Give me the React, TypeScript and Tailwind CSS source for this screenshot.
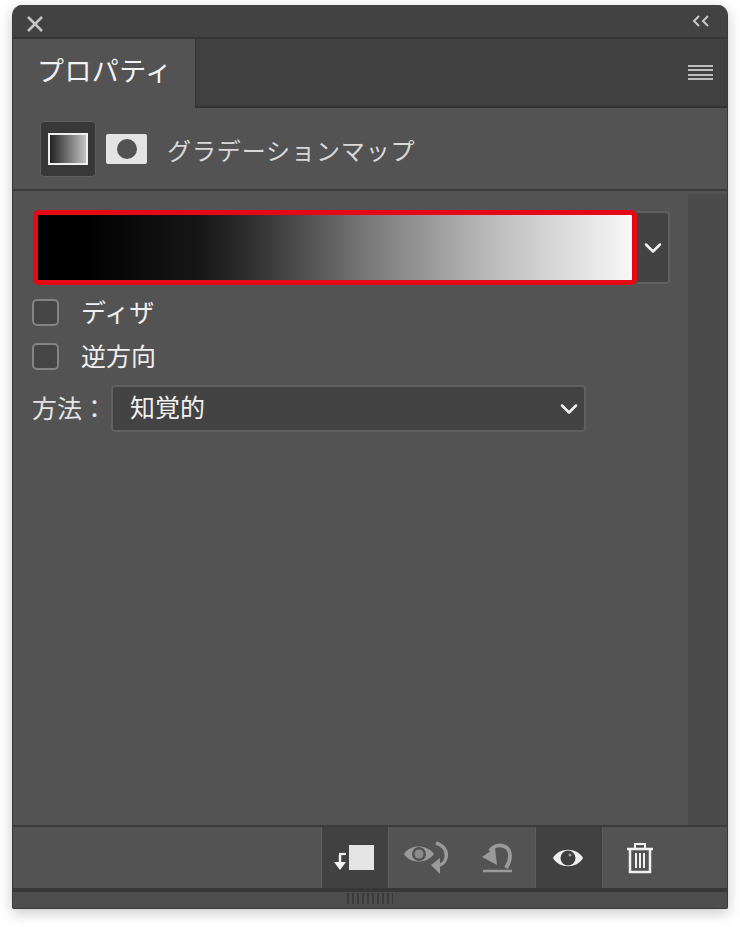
import { ChevronDown } from "lucide-react";

const font = { fontFamily: '"Noto Sans CJK JP", "Noto Sans", sans-serif' };

const Checkbox = ({ label, className }: { label: string; className: string }) => (
  <div className={`flex items-center ${className}`}>
    <div className="h-[27px] w-[27px] rounded-[5px] border-2 border-[#848484] bg-[#454545]" />
    <span className="mb-[3px] ml-[22px] text-[25px] leading-[24px] text-[#efefef]">{label}</span>
  </div>
);

const ClipIcon = () => (
  <svg width="42" height="28" viewBox="0 0 42 28">
    <path d="M8 11V20" stroke="#f2f2f2" strokeWidth="2.5" fill="none" />
    <path d="M7 10H14" stroke="#f2f2f2" strokeWidth="2.2" fill="none" />
    <path d="M2 18H14L8 26Z" fill="#f2f2f2" />
    <rect x="17" y="1" width="25" height="25" fill="#e4e4e4" />
  </svg>
);

const EyeCycleIcon = () => (
  <svg width="46" height="34" viewBox="0 0 46 34">
    <path d="M1 13C7 3 24 3 31 13C24 23 7 23 1 13Z" fill="#9a9a9a" />
    <circle cx="16" cy="13" r="7" fill="#535353" />
    <circle cx="16" cy="13" r="4.5" fill="#8c8c8c" />
    <path d="M33 2C46 6 47 21 35 25" stroke="#9a9a9a" strokeWidth="3.5" fill="none" />
    <path d="M28 24L37 17V33Z" fill="#9a9a9a" />
  </svg>
);

const ResetIcon = () => (
  <svg width="34" height="34" viewBox="0 0 34 34">
    <path d="M10 10C15 2 30 2 30 15C30 20 28 24 26 27" stroke="#9a9a9a" strokeWidth="3.8" fill="none" />
    <path d="M2 16L15 7L17 24Z" fill="#9a9a9a" />
    <path d="M3 30H32" stroke="#9a9a9a" strokeWidth="2.5" />
  </svg>
);

const EyeIcon = () => (
  <svg width="32" height="22" viewBox="0 0 32 22">
    <path d="M1 11C7 0 25 0 31 11C25 22 7 22 1 11Z" fill="#f0f0f0" />
    <circle cx="16" cy="11" r="7.5" fill="#3f3f3f" />
    <circle cx="18" cy="8" r="1.5" fill="#a0a0a0" />
  </svg>
);

const TrashIcon = () => (
  <svg width="28" height="32" viewBox="0 0 28 32" fill="none" stroke="#f0f0f0">
    <path d="M1 7H27" strokeWidth="2.5" />
    <path d="M9 6V2H19V6" strokeWidth="2" />
    <path d="M4 7V30H24V7" strokeWidth="2.5" />
    <path d="M10 11V26M14 11V26M18 11V26" strokeWidth="2" />
  </svg>
);

export default function App() {
  return (
    <div className="h-[927px] w-[740px] overflow-hidden bg-white pl-[12px] pt-[5px]" style={font}>
      <div className="flex h-[904px] w-[716px] flex-col overflow-hidden rounded-t-[10px] rounded-b-[2px] border-x border-b border-[#3a3a3a] bg-[#535353] shadow-[0_4px_14px_rgba(0,0,0,0.22)]">
        {/* title bar */}
        <div className="flex h-[34px] shrink-0 items-center justify-between border-b-2 border-[#363636] bg-[#424242] pl-[13px] pr-[17px]">
          <svg width="18" height="18" viewBox="0 0 18 18" stroke="#c4c4c4" strokeWidth="2.6" className="mt-[6px]">
            <path d="M2 2L16 16M16 2L2 16" />
          </svg>
          <svg width="18" height="12" viewBox="0 0 18 12" fill="none" stroke="#c8c8c8" strokeWidth="2">
            <path d="M7 1L2 6L7 11M16 1L11 6L16 11" />
          </svg>
        </div>

        {/* tab row */}
        <div className="flex h-[69px] shrink-0 bg-[#404040]">
          <div className="flex w-[182px] items-center bg-[#535353] pb-[6px] pl-[24px] text-[27px] tracking-[0.4px] text-[#f2f2f2]">
            プロパティ
          </div>
          <div className="flex flex-1 items-center justify-end border-b-2 border-l border-[#333333] pr-[14px]">
            <div className="flex h-[16px] w-[25px] flex-col justify-between">
              <div className="h-[2px] bg-[#bdbdbd]" />
              <div className="h-[2px] bg-[#bdbdbd]" />
              <div className="h-[2px] bg-[#bdbdbd]" />
              <div className="h-[2px] bg-[#bdbdbd]" />
            </div>
          </div>
        </div>

        {/* adjustment header */}
        <div className="flex h-[83px] shrink-0 items-center border-b-2 border-[#3b3b3b] pl-[27px]">
          <div className="flex h-[56px] w-[56px] items-center justify-center rounded-[4px] border border-[#5e5e5e] bg-[#383838]">
            <div className="h-[32px] w-[40px] border-2 border-[#efefef] bg-[linear-gradient(90deg,#222,#c4c4c4)]" />
          </div>
          <div className="ml-[10px] flex h-[30px] w-[41px] items-center justify-center rounded-[2px] bg-[#e4e4e4]">
            <div className="h-[20px] w-[20px] rounded-full bg-[#535353]" />
          </div>
          <span className="ml-[20px] pt-[3px] text-[24px] tracking-[0.9px] text-[#d8d8d8]">グラデーションマップ</span>
        </div>

        {/* body */}
        <div className="flex min-h-0 flex-1">
          <div className="flex-1 pl-[19px] pt-[19px]">
            <div className="flex items-center">
              <div className="ml-[1px] h-[75px] w-[604px] rounded-[6px] border-[5px] border-[#e50914] bg-[linear-gradient(90deg,#000_8%,#161616_27%,#333_37%,#585858_47%,#7a7a7a_56%,#c0c0c0_78%,#f8f8f8_100%)]" />
              <div className="flex h-[73px] w-[33px] items-center justify-center rounded-r-[4px] border-2 border-l-0 border-[#606060] bg-[#434343]">
                <ChevronDown size={28} strokeWidth={2.2} color="#efefef" />
              </div>
            </div>
            <Checkbox label="ディザ" className="mt-[14px]" />
            <Checkbox label="逆方向" className="mt-[17px]" />
            <div className="mt-[15px] flex items-center">
              <span className="mb-[3px] w-[79px] text-[25px] leading-[44px] text-[#e4e4e4]">方法：</span>
              <div className="flex h-[47px] w-[475px] items-center justify-between rounded-[4px] border-2 border-[#606060] bg-[#434343] pl-[17px] pr-[1px]">
                <span className="mb-[3px] text-[25px] text-[#f0f0f0]">知覚的</span>
                <ChevronDown size={28} strokeWidth={2.2} color="#efefef" />
              </div>
            </div>
          </div>
          <div className="mt-[3px] w-[39px] bg-[#4b4b4b]" />
        </div>

        {/* toolbar */}
        <div className="flex h-[63px] shrink-0 border-t-2 border-[#3b3b3b] pl-[308px]">
          <div className="flex w-[68px] items-center justify-center border-x border-[#5d5d5d] bg-[#414141] pr-[5px]">
            <ClipIcon />
          </div>
          <div className="flex w-[73px] items-center justify-center">
            <EyeCycleIcon />
          </div>
          <div className="flex w-[73px] items-center justify-center pr-[3px]">
            <ResetIcon />
          </div>
          <div className="flex w-[68px] items-center justify-center border-x border-[#5d5d5d] bg-[#414141] pr-[2px]">
            <EyeIcon />
          </div>
          <div className="flex w-[74px] items-center justify-center">
            <TrashIcon />
          </div>
        </div>

        {/* resize grip */}
        <div className="flex h-[20px] shrink-0 justify-center border-t-4 border-[#373737] bg-[#4d4d4d] pt-[1px]">
          <div className="h-[11px] w-[46px] bg-[repeating-linear-gradient(90deg,#3a3a3a_0_2px,transparent_2px_5px)]" />
        </div>
      </div>
    </div>
  );
}
